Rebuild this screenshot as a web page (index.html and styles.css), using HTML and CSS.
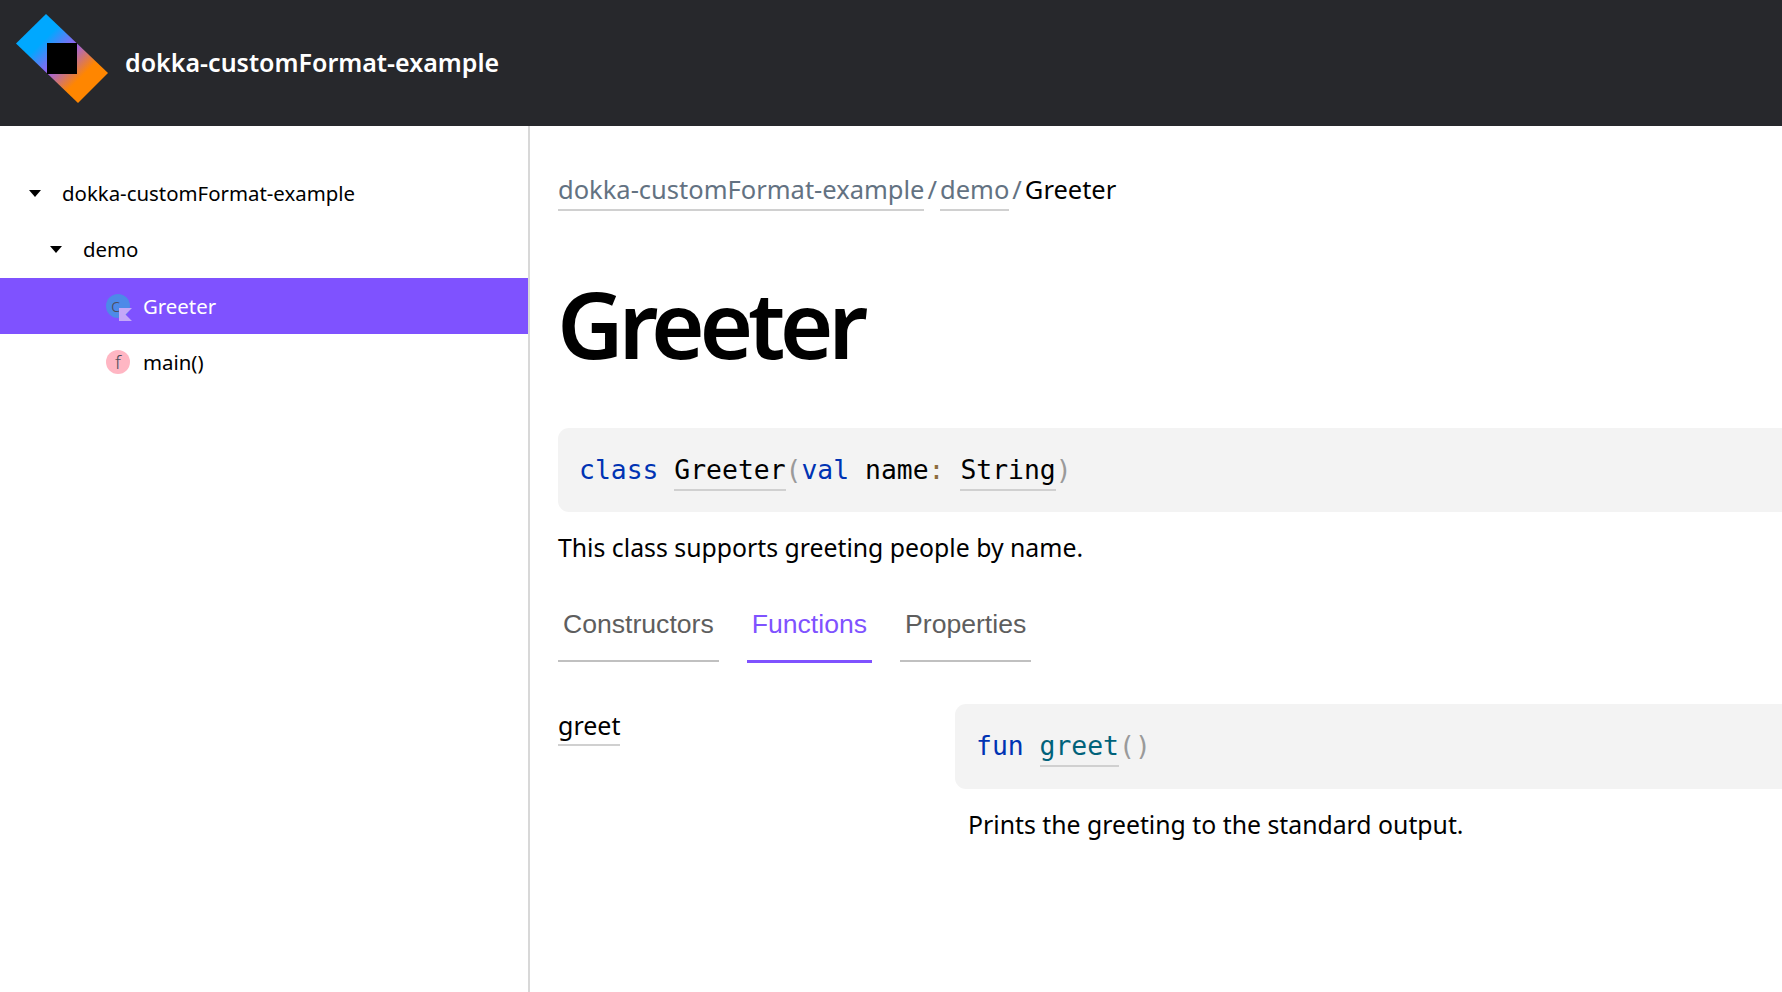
FILE: index.html
```html
<!DOCTYPE html>
<html lang="en">
<head>
    <meta charset="UTF-8">
    <meta name="viewport" content="width=device-width, initial-scale=1.0">
    <title>Greeter</title>
    <link rel="stylesheet" href="styles.css">
</head>
<body>
    <header class="navbar">
        <svg class="logo" width="92" height="89" viewBox="0 0 92 89" aria-hidden="true">
            <defs>
                <linearGradient id="logo-fill" gradientUnits="userSpaceOnUse" x1="16" y1="14" x2="76" y2="74">
                    <stop offset="0.2" stop-color="#00a8ff"/>
                    <stop offset="0.5" stop-color="#9a60f0"/>
                    <stop offset="0.82" stop-color="#ff8600"/>
                </linearGradient>
            </defs>
            <polygon points="30,0 92,59 62,89 0,29.5" fill="url(#logo-fill)"/>
            <rect x="31" y="29" width="30" height="31" fill="#000"/>
        </svg>
        <span class="project-name">dokka-customFormat-example</span>
    </header>

    <div class="container-wrapper">
        <nav class="sidebar">
            <div class="tree-row level-0"><span class="caret"></span><span>dokka-customFormat-example</span></div>
            <div class="tree-row level-1"><span class="caret"></span><span>demo</span></div>
            <div class="tree-row level-2 selected">
                <span class="kind-icon class-icon"><span class="kind-letter">c</span>
                    <svg class="kotlin-flag" width="13" height="13" viewBox="0 0 13 13" aria-hidden="true"><polygon points="0,0 13,0 6.5,6.5 13,13 0,13" fill="#c4a8f8"/></svg>
                </span>
                <span>Greeter</span>
            </div>
            <div class="tree-row level-2"><span class="kind-icon function-icon">f</span><span>main()</span></div>
        </nav>

        <main class="main-content">
            <div class="breadcrumbs">
                <a class="link">dokka-customFormat-example</a><span class="delimiter">/</span><a class="link">demo</a><span class="delimiter">/</span><span>Greeter</span>
            </div>

            <h1>Greeter</h1>

            <div class="code-block"><span class="keyword">class</span> <a class="code-link">Greeter</a><span class="punct">(</span><span class="keyword">val</span> name<span class="colon">:</span> <a class="code-link">String</a><span class="punct">)</span></div>

            <p class="description">This class supports greeting people by name.</p>

            <div class="tabs">
                <button class="tab">Constructors</button>
                <button class="tab active">Functions</button>
                <button class="tab">Properties</button>
            </div>

            <div class="member-row">
                <div class="member-name"><a class="link-dark">greet</a></div>
                <div class="member-details">
                    <div class="code-block small"><span class="keyword">fun</span> <a class="code-link function">greet</a><span class="punct">()</span></div>
                    <p class="member-doc">Prints the greeting to the standard output.</p>
                </div>
            </div>
        </main>
    </div>
</body>
</html>
```

FILE: styles.css
```css
body {
    margin: 0;
    min-height: 100vh;
    font-family: "Noto Sans", sans-serif;
    color: #000;
    background-color: #fff;
    overflow: hidden;
}

.navbar {
    height: 126px;
    background-color: #27282c;
    display: flex;
    align-items: center;
    box-sizing: border-box;
    padding-left: 16px;
}

.logo {
    flex-shrink: 0;
    margin-top: -9px;
    margin-right: 17px;
}

.project-name {
    color: #fff;
    font-size: 25px;
    font-weight: 600;
    margin-top: -2px;
}

.container-wrapper {
    display: flex;
    height: 866px;
}

.sidebar {
    width: 528px;
    flex-shrink: 0;
    border-right: 2px solid #d8d8d8;
    padding-top: 40px;
}

.tree-row {
    height: 56px;
    box-sizing: border-box;
    display: flex;
    align-items: center;
    font-size: 20.4px;
}

.level-0 {
    padding-left: 29px;
    padding-bottom: 2px;
}

.level-1 {
    padding-left: 50px;
    padding-bottom: 2px;
}

.level-2 {
    padding-left: 106px;
}

.caret {
    width: 0;
    height: 0;
    border-left: 6px solid transparent;
    border-right: 6px solid transparent;
    border-top: 7px solid #000;
    margin-right: 21px;
}

.selected {
    background-color: #7f52ff;
    color: #fff;
}

.kind-icon {
    position: relative;
    width: 24px;
    height: 24px;
    border-radius: 50%;
    margin-right: 13px;
    display: flex;
    justify-content: center;
    align-items: center;
    font-size: 19px;
    font-weight: 300;
    line-height: 1;
    color: #4d4d5c;
}

.class-icon {
    background-color: #4d8ae8;
}

.kind-letter {
    margin: -2px 5px 0 0;
}

.function-icon {
    background-color: #ffb6c3;
}

.kotlin-flag {
    position: absolute;
    left: 13px;
    top: 14px;
}

.main-content {
    flex-grow: 1;
    min-width: 0;
    padding: 43px 0 0 28px;
}

.breadcrumbs {
    font-size: 25.5px;
    line-height: 40px;
    display: flex;
    color: #000;
}

.link {
    color: #637282;
    border-bottom: 2px solid #d0d0d0;
}

.delimiter {
    color: #637282;
    padding: 0 3px;
}

h1 {
    font-size: 92px;
    font-weight: 600;
    letter-spacing: -5.4px;
    line-height: 100px;
    margin: 63px 0 54px -1px;
}

.code-block {
    background-color: #f3f3f3;
    border-radius: 11px 0 0 11px;
    height: 84px;
    box-sizing: border-box;
    padding: 21px 0 0 21px;
    font-family: "DejaVu Sans Mono", monospace;
    font-size: 26.4px;
    line-height: 42px;
    white-space: nowrap;
}

.keyword {
    color: #0033b3;
}

.punct {
    color: #9a9a9a;
}

.colon {
    color: #8c6c3e;
}

.code-link {
    padding-bottom: 4px;
    border-bottom: 2px solid #d0d0d0;
}

.function {
    color: #00627a;
}

.description {
    font-size: 24.8px;
    line-height: 40px;
    margin: 15px 0 0;
}

.tabs {
    display: flex;
    gap: 28px;
    margin-top: 33px;
}

.tab {
    font-family: "Liberation Sans", sans-serif;
    font-size: 26.6px;
    color: #5e5e5e;
    background: none;
    border: none;
    border-bottom: 2px solid #c0c0c0;
    height: 62px;
    padding: 0 5px 12px;
}

.tab.active {
    color: #7f52ff;
    border-bottom: 3px solid #7f52ff;
    height: 63px;
}

.member-row {
    display: grid;
    grid-template-columns: 397px 1fr;
    margin-top: 41px;
}

.member-name {
    font-size: 25px;
    line-height: 38px;
    padding-top: 2px;
}

.link-dark {
    display: inline-block;
    border-bottom: 2px solid #d0d0d0;
}

.code-block.small {
    height: 85px;
}

.member-doc {
    font-size: 24.8px;
    line-height: 40px;
    margin: 15px 0 0 13px;
}
```
